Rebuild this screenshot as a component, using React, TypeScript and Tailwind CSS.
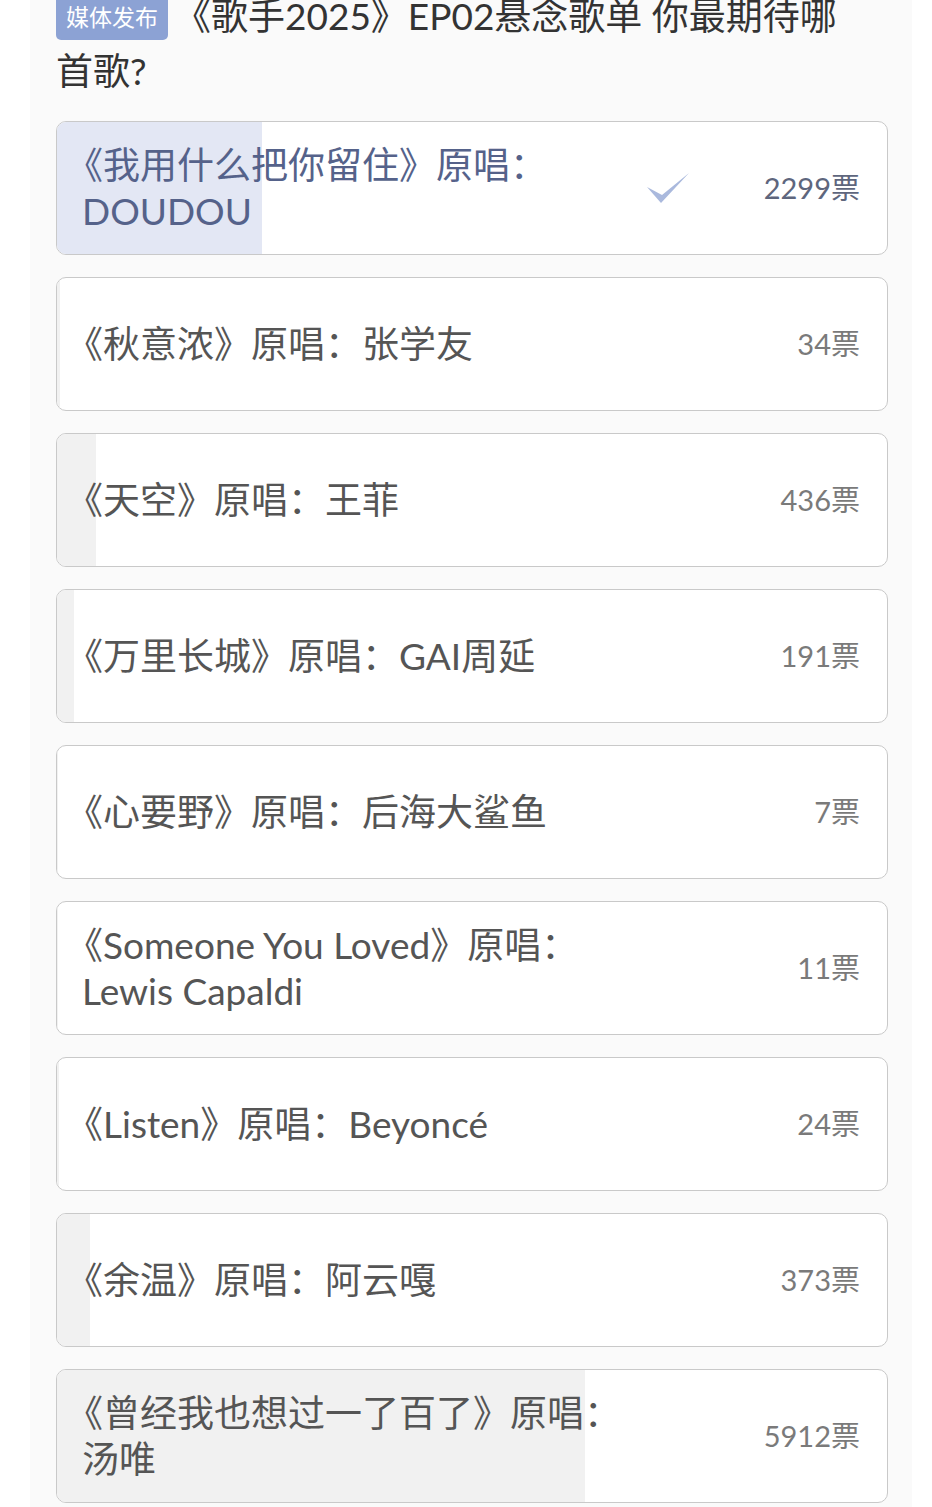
import React from "react";

type Option = {
    title: string;
    votes: number;
};

const options: Option[] = [
    { title: "我用什么把你留住》原唱：DOUDOU", votes: 2299 },
    { title: "秋意浓》原唱：张学友", votes: 34 },
    { title: "天空》原唱：王菲", votes: 436 },
    { title: "万里长城》原唱：GAI周延", votes: 191 },
    { title: "心要野》原唱：后海大鲨鱼", votes: 7 },
    { title: "Someone You Loved》原唱：Lewis Capaldi", votes: 11 },
    { title: "Listen》原唱：Beyoncé", votes: 24 },
    { title: "余温》原唱：阿云嘎", votes: 373 },
    { title: "曾经我也想过一了百了》原唱：汤唯", votes: 5912 },
];

const selected = 0;

const font = { fontFamily: "Lato, 'Noto Sans CJK SC', sans-serif" };

const App: React.FC = () => {
    const total = options.reduce((s, o) => s + o.votes, 0);

    return (
        <div className="min-h-[1507px] bg-white" style={font}>
            <div className="ml-[30px] mr-[20px] bg-[#fafafa] pl-[26px] pr-[24px] pb-[6px]">
                {/* Titel */}
                <h1 className="-mt-[12px] max-w-[800px] text-[37px] leading-[55px] text-[#333] font-normal">
                    <span className="inline-block align-[4px] mr-[6px] rounded-[5px] bg-[#8ca2d4] px-[10px] text-[23px] leading-[46px] text-white">
                        媒体发布
                    </span>
                    《歌手2025》EP02悬念歌单 你最期待哪首歌?
                </h1>

                {/* Optionen */}
                <div className="mt-[23px] flex flex-col gap-[22px]">
                    {options.map((o, i) => {
                        const isSel = i === selected;
                        const pct = (o.votes / total) * 100;
                        return (
                            <div
                                key={i}
                                className="relative h-[134px] overflow-hidden rounded-[10px] border border-[#c9c9c9] bg-white"
                            >
                                <div
                                    className={isSel ? "absolute inset-y-0 left-0 bg-[#e3e7f4]" : "absolute inset-y-0 left-0 bg-[#f1f1f1]"}
                                    style={{ width: `${pct}%` }}
                                />
                                <div className="relative flex h-full items-center pl-[25px] pr-[27px]">
                                    <p
                                        className={
                                            isSel
                                                ? "max-w-[565px] text-[37px] leading-[46px] text-[#55628a]"
                                                : "max-w-[565px] text-[37px] leading-[46px] text-[#555]"
                                        }
                                    >
                                        <span className="-ml-[16px]">《</span>
                                        {o.title}
                                    </p>
                                    <div className="flex-1" />
                                    {isSel && (
                                        <svg width="44" height="34" viewBox="0 0 44 34" className="mr-[74px] shrink-0">
                                            <path d="M1 16 L15 32 L43 2 L16 24 Z" fill="#aab9dd" />
                                        </svg>
                                    )}
                                    <span
                                        className={
                                            isSel
                                                ? "shrink-0 whitespace-nowrap text-[29px] text-[#5e667d]"
                                                : "shrink-0 whitespace-nowrap text-[29px] text-[#7a7a7a]"
                                        }
                                    >
                                        {o.votes}票
                                    </span>
                                </div>
                            </div>
                        );
                    })}
                </div>
            </div>
        </div>
    );
};

export default App;
